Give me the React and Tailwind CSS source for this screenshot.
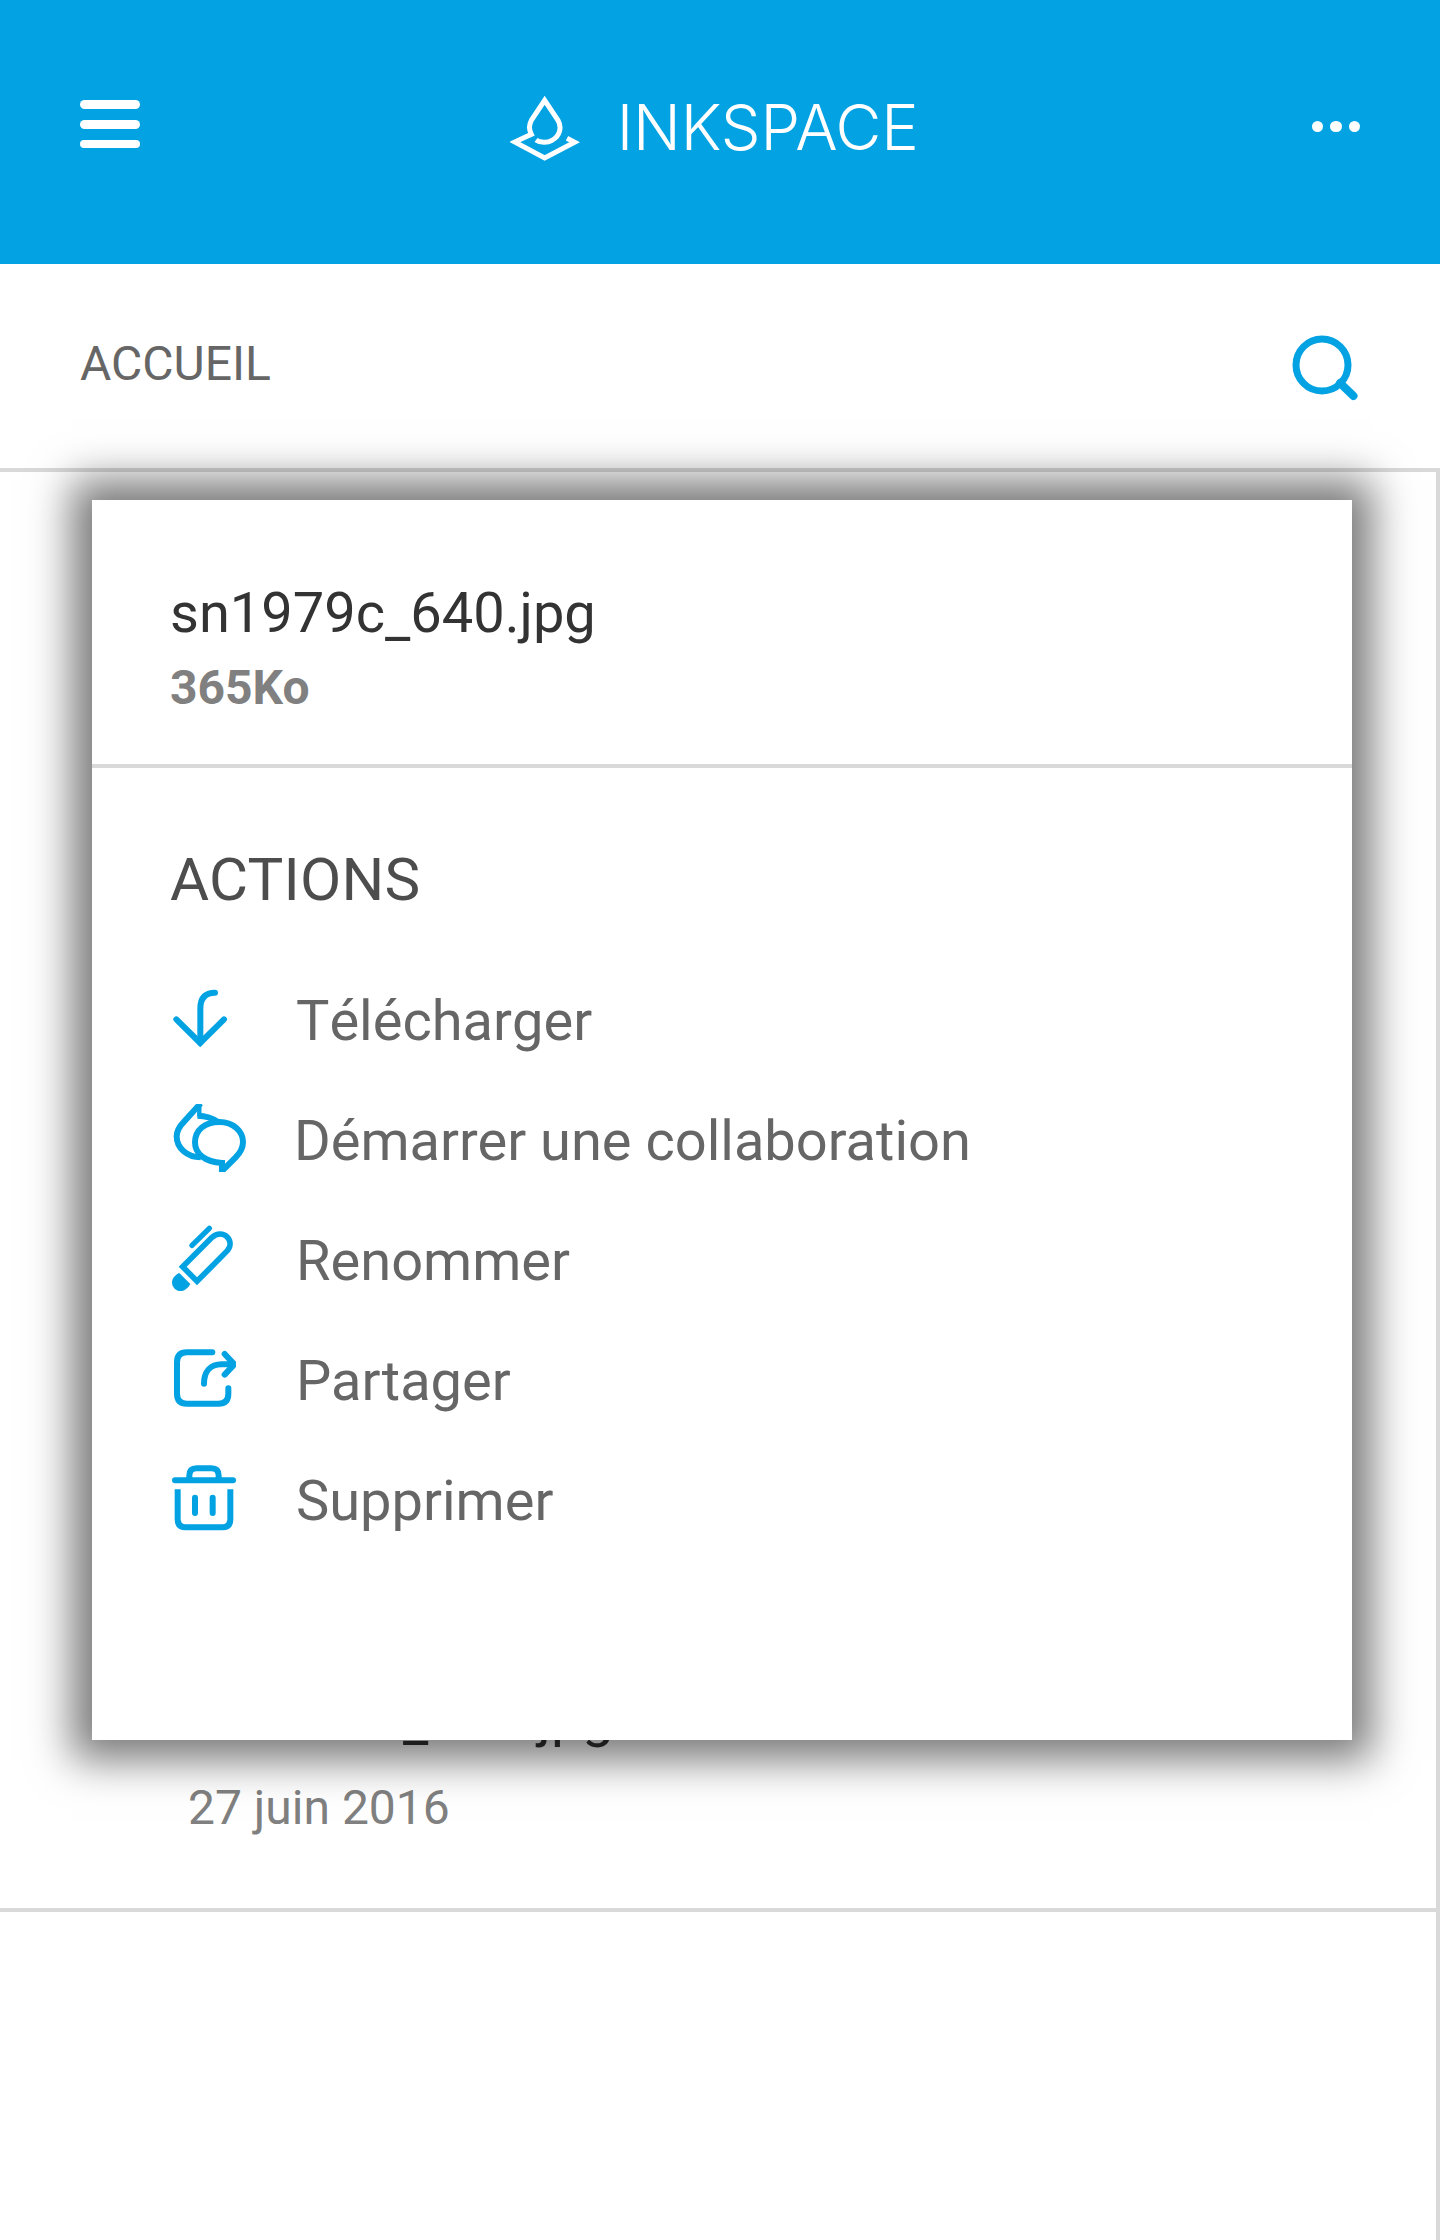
const stroke = {
  fill: "none",
  stroke: "currentColor",
  strokeWidth: 18,
  strokeLinecap: "round",
};

function ActionIcon({ viewBox, children }) {
  return (
    <svg viewBox={viewBox} className="h-[120px] w-[124px] shrink-0 text-[#02a2e3]" {...stroke}>
      {children}
    </svg>
  );
}

// The underscore is set a little below the font's own position.
function FileName() {
  return (
    <span className="block text-[56px] leading-[66px] text-[#333]">
      sn1979c<span className="align-[-5px] leading-none">_</span>640.jpg
    </span>
  );
}

const actions = [
  {
    label: "Télécharger",
    labelClass: "[font-kerning:none]",
    icon: (
      <ActionIcon viewBox="66 3 372 360">
        <path d="M195 98C165 98 151 115 151 145V248" />
        <path d="M79 178L150.500 249L222 178" />
      </ActionIcon>
    ),
  },
  {
    label: "Démarrer une collaboration",
    labelClass: "-ml-0.5",
    icon: (
      <ActionIcon viewBox="66 363 372 360">
        <clipPath id="bubbles">
          <rect x="66" y="432" width="240" height="204" />
        </clipPath>
        <g clipPath="url(#bubbles)" strokeLinecap="butt">
          <path d="M216 609C163 606 135 580 135 547C135 510 165 486 208 486C250 486 279 514 279 546C279 567 270 579 257 592L212 637" />
          <path d="M216 600V640" />
          <path d="M152 430L103 484C87 500 80 512 80 529C80 565 112 592 152 592" />
          <path d="M148 430V468" strokeWidth="13" />
          <path d="M142 467C172 467 190 475 207 488" />
        </g>
      </ActionIcon>
    ),
  },
  {
    label: "Renommer",
    icon: (
      <ActionIcon viewBox="66 3 372 360">
        <path d="M126 136L178 85" strokeWidth="16" />
        <path
          d="M98 200L186 112C201 99 220 99 231 110C243 122 243 139 232 152L141 244Z"
          strokeWidth="17"
        />
        <path
          d="M88 219L121 252C108 275 87 279 74 266C60 252 64 230 88 219Z"
          fill="currentColor"
          stroke="none"
        />
      </ActionIcon>
    ),
  },
  {
    label: "Partager",
    icon: (
      <ActionIcon viewBox="66 363 372 360">
        <clipPath id="share">
          <rect x="66" y="432" width="192" height="204" />
        </clipPath>
        <g clipPath="url(#share)">
          <path d="M187 457H111Q81 457 81 487V581Q81 611 111 611H205Q235 611 235 581V565" />
          <path d="M162 551C162 515 181 493 215 493H250" />
          <path d="M224 462L253 493L224 524" />
        </g>
      </ActionIcon>
    ),
  },
  {
    label: "Supprimer",
    icon: (
      <ActionIcon viewBox="66 723 372 360">
        <path d="M75 841H249" />
        <path
          d="M118 835V827Q118 805 140 805H184Q206 805 206 827V835M83 868V958Q83 982 107 982H217Q241 982 241 958V868"
          strokeLinecap="butt"
        />
        <path d="M135 893V939M188 893V939" />
      </ActionIcon>
    ),
  },
];

function Header() {
  return (
    <header className="flex h-[264px] items-start justify-between bg-[#02a2e3] px-20 text-white">
      <button aria-label="Menu" className="mt-[100px] flex w-[60px] flex-col gap-[11px]">
        <span className="h-[9px] rounded-full bg-white" />
        <span className="h-[9px] rounded-full bg-white" />
        <span className="h-[8px] rounded-full bg-white" />
      </button>
      <div className="mt-[95px] flex w-[432px] items-start">
        <svg
          viewBox="60 75 210 201"
          className="h-[67px] w-[70px]"
          fill="none"
          stroke="currentColor"
          strokeWidth="15"
        >
          <path d="M138 210C150 219 173 219 186 211C210 198 216 172 204 151L164 91L124 151C116 166 117 180 124 193L74 216L164 264L254 217L231 205" />
        </svg>
        <span className="ml-[37px] mt-px whitespace-nowrap font-[Inter] text-[63px] font-[330] leading-[62px] tracking-[-0.200px]">
          INKSPACE
        </span>
      </div>
      <button aria-label="Plus" className="mt-[120.500px] flex gap-[7px]">
        <span className="size-[11.500px] rounded-full bg-white" />
        <span className="size-[11.500px] rounded-full bg-white" />
        <span className="size-[11.500px] rounded-full bg-white" />
      </button>
    </header>
  );
}

export default function App() {
  return (
    <div className="relative flex h-[2240px] w-[1440px] flex-col overflow-hidden bg-white font-[Roboto,sans-serif]">
      <Header />
      <div className="flex h-[208px] items-start justify-between border-b-4 border-[#d9d9d9] pl-20 pr-[84px]">
        <span className="mt-[72px] text-[48px] leading-[56px] text-[#666]">ACCUEIL</span>
        <svg
          viewBox="0 0 66 66"
          className="mt-[71px] h-[66px] w-[66px] overflow-visible text-[#02a2e3]"
          fill="none"
          stroke="currentColor"
        >
          <circle cx="32" cy="30" r="26" strokeWidth="7" />
          <path d="M50 48L63.500 61" strokeWidth="8" strokeLinecap="round" />
        </svg>
      </div>
      <main className="flex-1 border-r-4 border-[#d9d9d9]">
        <article className="flex h-[1440px] flex-col justify-end border-b-4 border-[#d9d9d9] pb-[70px] pl-[188px]">
          <FileName />
          <time className="mt-7 text-[48px] leading-[60px] text-[#808080]">27 juin 2016</time>
        </article>
      </main>

      <section className="absolute left-[92px] top-[500px] h-[1240px] w-[1260px] bg-white shadow-[0_0_40px_20px_rgba(0,0,0,0.53)]">
        <div className="flex h-[268px] flex-col border-b-4 border-[#d9d9d9] pl-[78px] pt-[80px]">
          <FileName />
          <span className="mt-[14px] text-[48px] font-bold leading-[56px] text-[#808080]">365Ko</span>
        </div>
        <h2 className="mt-[77px] pl-[78px] text-[60px] leading-[70px] tracking-[0.200px] text-[#4d4d4d]">
          ACTIONS
        </h2>
        <ul className="mt-[46px] pl-20">
          {actions.map(({ label, icon, labelClass = "" }) => (
            <li key={label} className="flex h-[120px] text-[56px] leading-[120px] text-[#666]">
              {icon}
              <span className={labelClass}>{label}</span>
            </li>
          ))}
        </ul>
      </section>
    </div>
  );
}
